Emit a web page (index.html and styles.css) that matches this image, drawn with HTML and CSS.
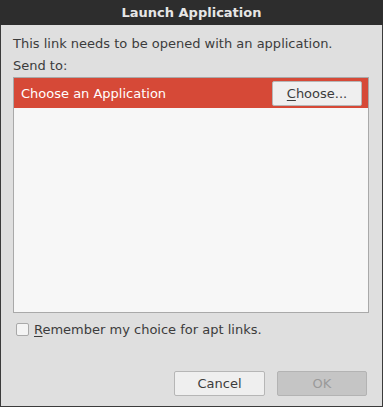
FILE: index.html
```html
<!DOCTYPE html>
<html>
<head>
<meta charset="utf-8">
<link rel="stylesheet" href="styles.css">
</head>
<body>
<div class="window">
  <div class="titlebar">Launch Application</div>
  <div class="content">
    <div class="msg">This link needs to be opened with an application.</div>
    <div class="sendto">Send to:</div>
    <div class="list">
      <div class="row-selected">
        <span class="row-label">Choose an Application</span>
        <button class="btn choose"><u>C</u>hoose...</button>
      </div>
      <div class="list-body"></div>
    </div>
    <label class="check">
      <span class="box"></span>
      <span class="check-label"><u>R</u>emember my choice for apt links.</span>
    </label>
    <div class="actions">
      <button class="btn action">Cancel</button>
      <button class="btn action disabled">OK</button>
    </div>
  </div>
</div>
</body>
</html>
```
FILE: styles.css
```css
* { box-sizing: border-box; }
html, body { margin: 0; padding: 0; }
body {
  width: 383px;
  height: 407px;
  font-family: "DejaVu Sans", "Open Sans", sans-serif;
  font-size: 13px;
  color: #3c3c3c;
}
.window {
  width: 383px;
  height: 407px;
  display: flex;
  flex-direction: column;
  background: #dfdfdf;
  border: 1px solid #3b3b3b;
  border-top: none;
}
.titlebar {
  height: 25px;
  background: #2d2d2d;
  color: #e6e6e6;
  font-weight: bold;
  font-size: 13px;
  display: flex;
  align-items: center;
  justify-content: center;
  margin: 0 -1px;
}
.content {
  flex: 1;
  display: flex;
  flex-direction: column;
  padding: 9px 13px 0 12px;
}
.msg { height: 20px; line-height: 20px; }
.sendto { height: 21px; line-height: 21px; margin-top: 1px; }
.list {
  margin-top: 1px;
  height: 236px;
  border: 1px solid #a9a9a9;
  background: #f7f7f7;
  display: flex;
  flex-direction: column;
}
.row-selected {
  height: 30px;
  background: #d64937;
  color: #ffffff;
  display: flex;
  align-items: center;
  justify-content: space-between;
  padding: 0 6px 0 7px;
}
.btn {
  font-family: inherit;
  font-size: 13px;
  color: #3c3c3c;
  background: #efefef;
  border: 1px solid #b6b6b6;
  border-radius: 2px;
  padding: 0;
}
.choose { width: 90px; height: 25px; }
.btn u, .check u { text-decoration: underline; text-underline-offset: 2px; }
.check {
  display: flex;
  align-items: center;
  margin-top: 8px;
  height: 16px;
  padding-left: 3px;
}
.box {
  width: 13px;
  height: 13px;
  border: 1px solid #a9a9a9;
  border-radius: 2px;
  background: #f4f4f4;
  margin-right: 5px;
}
.actions {
  display: flex;
  justify-content: flex-end;
  gap: 12px;
  margin-top: 34px;
  padding-right: 2px;
}
.action { width: 91px; height: 25px; }
.disabled {
  background: #c5c5c5;
  color: #9a9a9a;
  border-color: #b3b3b3;
  width: 90px;
}
```
